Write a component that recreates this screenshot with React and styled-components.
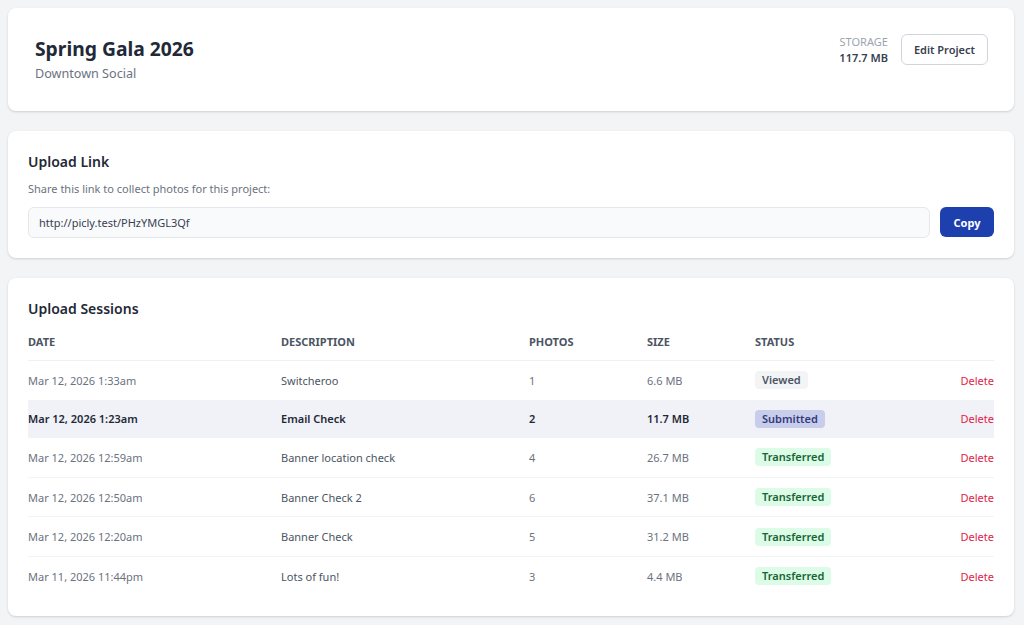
import React from "react";
import styled, { createGlobalStyle } from "styled-components";

const GlobalStyle = createGlobalStyle`
  body {
    margin: 0;
    background: #f3f4f6;
    font-family: "Noto Sans", "Open Sans", Arial, sans-serif;
    color: #1f2937;
  }
`;

const Page = styled.div`
  display: flex;
  flex-direction: column;
  gap: 20px;
  padding: 8px 10px 10px 8px;
`;

const Card = styled.section`
  background: #fff;
  border-radius: 8px;
  box-shadow: 0 1px 3px rgba(0, 0, 0, 0.1), 0 1px 2px rgba(0, 0, 0, 0.06);
  padding: ${(p) => p.$pad || "20px"};
`;

const HeaderRow = styled.div`
  display: flex;
  justify-content: space-between;
  align-items: flex-start;
`;

const Title = styled.h1`
  margin: 0;
  font-size: 19.3px;
  line-height: 28px;
  font-weight: 700;
  color: #1f2937;
`;

const Subtitle = styled.div`
  margin-top: 1px;
  font-size: 12.6px;
  line-height: 20px;
  color: #6b7280;
`;

const Actions = styled.div`
  display: flex;
  align-items: flex-start;
  gap: 13px;
`;

const Storage = styled.div`
  text-align: right;
  margin-top: -1px;
`;

const StorageLabel = styled.div`
  font-size: 11px;
  line-height: 15px;
  color: #9ca3af;
  text-transform: uppercase;
`;

const StorageValue = styled.div`
  font-size: 11px;
  line-height: 17px;
  font-weight: 600;
  color: #374151;
`;

const OutlineButton = styled.button`
  font-family: inherit;
  font-size: 11px;
  font-weight: 600;
  color: #374151;
  background: #fff;
  border: 1px solid #d1d5db;
  border-radius: 6px;
  height: 31px;
  padding: 0 12px;
  margin-top: -1px;
  cursor: pointer;
`;

const SectionTitle = styled.h2`
  margin: 0;
  font-size: 14px;
  line-height: 22px;
  font-weight: 600;
  color: #1f2937;
`;

const Hint = styled.p`
  margin: 8px 0 10px;
  font-size: 11px;
  line-height: 16px;
  color: #6b7280;
`;

const LinkRow = styled.div`
  display: flex;
  align-items: flex-start;
  gap: 10px;
`;

const LinkInput = styled.input`
  flex: 1;
  font-family: inherit;
  font-size: 11px;
  color: #374151;
  background: #f9fafb;
  border: 1px solid #e5e7eb;
  border-radius: 6px;
  height: 31px;
  padding: 0 10px;
  box-sizing: border-box;
  outline: none;
`;

const PrimaryButton = styled.button`
  font-family: inherit;
  font-size: 11px;
  font-weight: 700;
  color: #fff;
  background: #1e40af;
  border: none;
  border-radius: 6px;
  height: 30px;
  width: 54px;
  cursor: pointer;
`;

const Table = styled.table`
  width: 100%;
  margin-top: 2px;
  border-collapse: collapse;
  table-layout: fixed;
  font-size: 11px;
`;

const Th = styled.th`
  text-align: left;
  font-size: 11px;
  font-weight: 700;
  color: #4b5563;
  text-transform: uppercase;
  height: 38px;
  padding: 0;
  border-bottom: 1px solid #eef0f3;
`;

const Row = styled.tr`
  background: ${(p) => (p.$active ? "#f1f2f8" : "transparent")};
  font-weight: ${(p) => (p.$active ? 600 : 400)};
  & + & td {
    border-top: 1px solid #f3f4f6;
  }
`;

const Td = styled.td`
  padding: 0;
  height: 38.6px;
  color: ${(p) => p.$color || "#4b5563"};
  text-align: ${(p) => p.$align || "left"};
`;

const badgeColors = {
  Viewed: { bg: "#f3f4f6", fg: "#4b5563" },
  Submitted: { bg: "#c7cdea", fg: "#343b7c" },
  Transferred: { bg: "#dcfce7", fg: "#166534" },
};

const Badge = styled.span`
  display: inline-block;
  font-size: 11px;
  font-weight: 600;
  line-height: 18px;
  padding: 0 7px;
  border-radius: 4px;
  background: ${(p) => badgeColors[p.$status].bg};
  color: ${(p) => badgeColors[p.$status].fg};
`;

const DeleteLink = styled.a`
  color: #e11d48;
  font-weight: 400;
  cursor: pointer;
`;

const sessions = [
  { date: "Mar 12, 2026 1:33am", desc: "Switcheroo", photos: 1, size: "6.6 MB", status: "Viewed" },
  { date: "Mar 12, 2026 1:23am", desc: "Email Check", photos: 2, size: "11.7 MB", status: "Submitted", active: true },
  { date: "Mar 12, 2026 12:59am", desc: "Banner location check", photos: 4, size: "26.7 MB", status: "Transferred" },
  { date: "Mar 12, 2026 12:50am", desc: "Banner Check 2", photos: 6, size: "37.1 MB", status: "Transferred" },
  { date: "Mar 12, 2026 12:20am", desc: "Banner Check", photos: 5, size: "31.2 MB", status: "Transferred" },
  { date: "Mar 11, 2026 11:44pm", desc: "Lots of fun!", photos: 3, size: "4.4 MB", status: "Transferred" },
];

export default function App() {
  return (
    <>
      <GlobalStyle />
      <Page>
        <Card $pad="27px 26px 27px 27px">
          <HeaderRow>
            <div>
              <Title>Spring Gala 2026</Title>
              <Subtitle>Downtown Social</Subtitle>
            </div>
            <Actions>
              <Storage>
                <StorageLabel>Storage</StorageLabel>
                <StorageValue>117.7 MB</StorageValue>
              </Storage>
              <OutlineButton>Edit Project</OutlineButton>
            </Actions>
          </HeaderRow>
        </Card>

        <Card>
          <SectionTitle>Upload Link</SectionTitle>
          <Hint>Share this link to collect photos for this project:</Hint>
          <LinkRow>
            <LinkInput readOnly value="http://picly.test/PHzYMGL3Qf" />
            <PrimaryButton>Copy</PrimaryButton>
          </LinkRow>
        </Card>

        <Card>
          <SectionTitle>Upload Sessions</SectionTitle>
          <Table>
            <colgroup>
              <col style={{ width: 253 }} />
              <col style={{ width: 248 }} />
              <col style={{ width: 118 }} />
              <col style={{ width: 108 }} />
              <col style={{ width: 120 }} />
              <col />
            </colgroup>
            <thead>
              <tr>
                <Th>Date</Th>
                <Th>Description</Th>
                <Th>Photos</Th>
                <Th>Size</Th>
                <Th>Status</Th>
                <Th />
              </tr>
            </thead>
            <tbody>
              {sessions.map((s) => (
                <Row key={s.date} $active={s.active}>
                  <Td $color={s.active ? "#1f2937" : "#6b7280"}>{s.date}</Td>
                  <Td $color={s.active ? "#1f2937" : "#4b5563"}>{s.desc}</Td>
                  <Td $color={s.active ? "#1f2937" : "#6b7280"}>{s.photos}</Td>
                  <Td $color={s.active ? "#1f2937" : "#6b7280"}>{s.size}</Td>
                  <Td>
                    <Badge $status={s.status}>{s.status}</Badge>
                  </Td>
                  <Td $align="right">
                    <DeleteLink>Delete</DeleteLink>
                  </Td>
                </Row>
              ))}
            </tbody>
          </Table>
        </Card>
      </Page>
    </>
  );
}
